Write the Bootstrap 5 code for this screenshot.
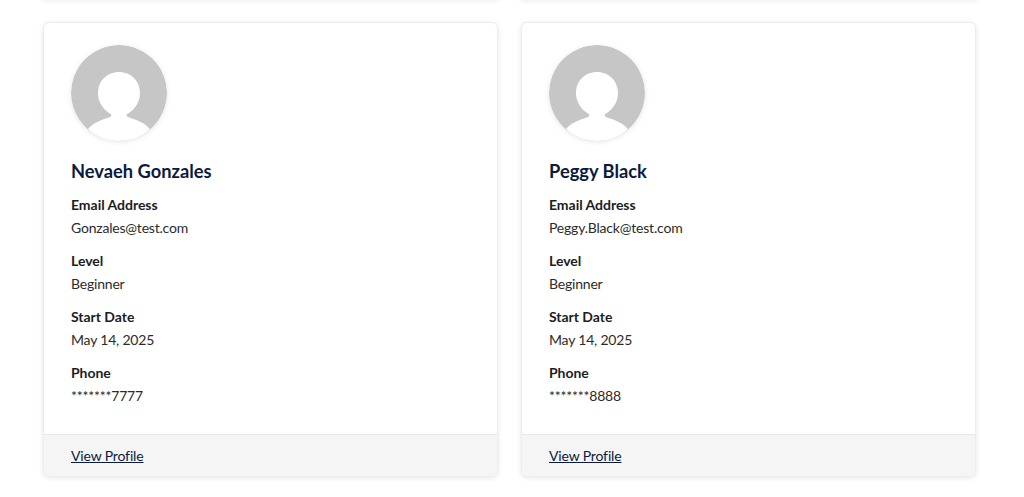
<!doctype html>
<html lang="en"><head><meta charset="utf-8"><title>Profiles</title>
<link href="https://cdn.jsdelivr.net/npm/bootstrap@5.3.0/dist/css/bootstrap.min.css" rel="stylesheet">
<style>
html,body{height:497px;overflow:hidden;background:#fff}
body{font-family:Lato,"Liberation Sans",sans-serif;font-size:14px;color:#212529}
.page-wrap{width:1024px;padding:0 48px 0 43px}
.stub-row{display:grid;grid-template-columns:455px 455px;column-gap:23px;height:22px}
.stub{height:0;box-shadow:0 0 4px 1px rgba(0,0,0,.12);border-radius:0 0 6px 6px}
.card-row{display:grid;grid-template-columns:455px 455px;column-gap:23px}
.person{height:455px;border:1px solid #ededed;border-radius:6px;box-shadow:0 1px 5px rgba(0,0,0,.1);overflow:hidden;background:#fff}
.person .card-body{padding:22px 27px 0}
.avatar{display:block;width:96px;height:96px;border-radius:50%;box-shadow:0 1px 5px rgba(0,0,0,.1)}
.person-name{font-size:18.3px;font-weight:700;color:#0c1a3d;line-height:24px;margin:18px 0 10px}
.info-label{font-weight:700;line-height:23px;color:#1d1d1f;letter-spacing:-.03px}
.info-value{line-height:23px;margin-bottom:10px;color:#2b2b2b;letter-spacing:-.2px}
.person .card-footer{height:42px;padding:0 27px;background:#f5f5f5;border-top:1px solid #e8e8e8;border-radius:0;display:flex;align-items:center}
.person-link{color:#0c1a3d;text-decoration:underline;letter-spacing:-.15px}
</style></head>
<body>
<div class="page-wrap">
<div class="stub-row"><div class="stub"></div><div class="stub"></div></div>
<div class="card-row">
<div class="card person"><div class="card-body">
<svg class="avatar" viewBox="0 0 96 96" aria-hidden="true"><circle cx="48" cy="48" r="48" fill="#c6c6c6"/><path d="M17 84C22 78 30 75 39 72C41 71 41 69 38 68C31 63 27 56 27 48C27 36 36 27 48 27C60 27 69 36 69 48C69 56 65 63 58 68C55 69 55 71 57 72C66 75 74 78 79 84C71 92 60 96 48 96C36 96 25 92 17 84Z" fill="#fff"/></svg>
<div class="person-name">Nevaeh Gonzales</div>
<div class="info-label">Email Address</div><div class="info-value">Gonzales@test.com</div>
<div class="info-label">Level</div><div class="info-value">Beginner</div>
<div class="info-label">Start Date</div><div class="info-value">May 14, 2025</div>
<div class="info-label">Phone</div><div class="info-value">*******7777</div>
</div><div class="card-footer"><a class="person-link" href="#">View Profile</a></div></div>
<div class="card person"><div class="card-body">
<svg class="avatar" viewBox="0 0 96 96" aria-hidden="true"><circle cx="48" cy="48" r="48" fill="#c6c6c6"/><path d="M17 84C22 78 30 75 39 72C41 71 41 69 38 68C31 63 27 56 27 48C27 36 36 27 48 27C60 27 69 36 69 48C69 56 65 63 58 68C55 69 55 71 57 72C66 75 74 78 79 84C71 92 60 96 48 96C36 96 25 92 17 84Z" fill="#fff"/></svg>
<div class="person-name">Peggy Black</div>
<div class="info-label">Email Address</div><div class="info-value">Peggy.Black@test.com</div>
<div class="info-label">Level</div><div class="info-value">Beginner</div>
<div class="info-label">Start Date</div><div class="info-value">May 14, 2025</div>
<div class="info-label">Phone</div><div class="info-value">*******8888</div>
</div><div class="card-footer"><a class="person-link" href="#">View Profile</a></div></div>
</div></div>
<script src="https://cdn.jsdelivr.net/npm/bootstrap@5.3.0/dist/js/bootstrap.bundle.min.js"></script>
</body></html>
